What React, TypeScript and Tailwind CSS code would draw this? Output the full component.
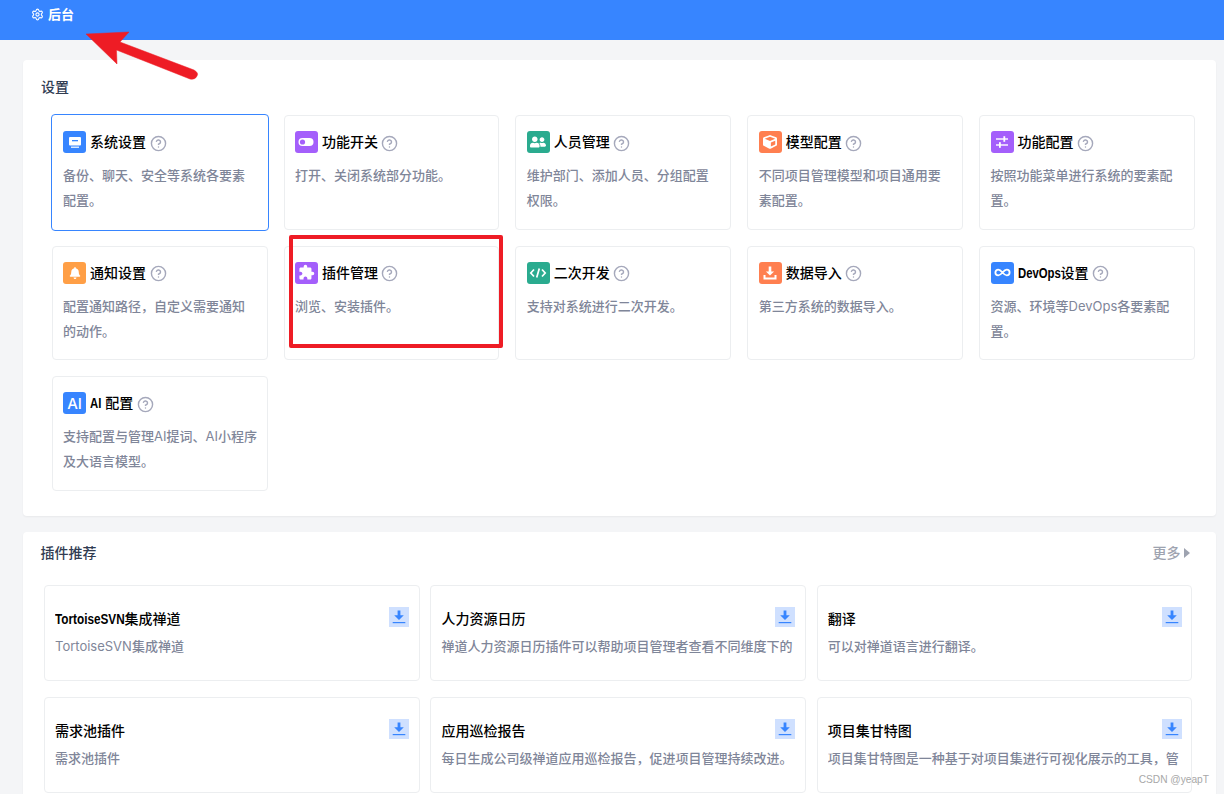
import { CircleHelp, Settings, Infinity as InfinityIcon } from "lucide-react";
import { FaBell, FaCube, FaUserFriends } from "react-icons/fa";
import { MdExtension } from "react-icons/md";
import type { ReactNode } from "react";

const Monitor = (
  <svg viewBox="0 0 22 22" className="w-[22px] h-[22px]">
    <rect x="5" y="6" width="12" height="8.5" rx="1" fill="#fff" />
    <rect x="8" y="9" width="6" height="1.3" fill="#3785ff" />
    <rect x="7" y="15.6" width="8" height="1.2" fill="#fff" />
  </svg>
);
const Toggle = (
  <svg viewBox="0 0 22 22" className="w-[22px] h-[22px]">
    <rect x="3.5" y="7" width="15" height="8" rx="4" fill="#fff" />
    <circle cx="7.5" cy="11" r="2.6" fill="#a45ffb" />
  </svg>
);
const CodeIcon = (
  <svg viewBox="0 0 22 22" className="w-[22px] h-[22px]" fill="none" stroke="#fff" strokeWidth="1.7">
    <path d="M7 7.5 3.8 11 7 14.5M15 7.5l3.2 3.5-3.2 3.5M12.3 6.5l-2.6 9" />
  </svg>
);
const Sliders = (
  <svg viewBox="0 0 22 22" className="w-[22px] h-[22px]" fill="#fff">
    <rect x="5" y="7.3" width="12" height="1.4" />
    <rect x="5" y="13.3" width="12" height="1.4" />
    <rect x="12.4" y="5.2" width="1.8" height="5.6" />
    <rect x="8" y="11.2" width="1.8" height="5.6" />
  </svg>
);
const ImportIcon = (
  <svg viewBox="0 0 22 22" className="w-[22px] h-[22px]" fill="#fff">
    <path d="M9.7 4.5h2.6v5h2.8L11 13.6 6.9 9.5h2.8z" />
    <path d="M4.5 13h2v2.4h9V13h2v4.4h-13z" />
  </svg>
);

type Item = { title: ReactNode; desc: ReactNode; color: string; icon: ReactNode; active?: boolean };

const items: Item[] = [
  { title: "系统设置", desc: "备份、聊天、安全等系统各要素配置。", color: "bg-[#3785ff]", icon: Monitor, active: true },
  { title: "功能开关", desc: "打开、关闭系统部分功能。", color: "bg-[#a45ffb]", icon: Toggle },
  { title: "人员管理", desc: "维护部门、添加人员、分组配置权限。", color: "bg-[#2aab8f]", icon: <FaUserFriends className="text-white text-[16px]" /> },
  { title: "模型配置", desc: "不同项目管理模型和项目通用要素配置。", color: "bg-[#ff7f50]", icon: <FaCube className="text-white text-[14px]" /> },
  { title: "功能配置", desc: "按照功能菜单进行系统的要素配置。", color: "bg-[#a45ffb]", icon: Sliders },
  { title: "通知设置", desc: "配置通知路径，自定义需要通知的动作。", color: "bg-[#ff9f46]", icon: <FaBell className="text-white text-[12px]" /> },
  { title: "插件管理", desc: "浏览、安装插件。", color: "bg-[#a45ffb]", icon: <MdExtension className="text-white text-[17px]" /> },
  { title: "二次开发", desc: "支持对系统进行二次开发。", color: "bg-[#2aab8f]", icon: CodeIcon },
  { title: "数据导入", desc: "第三方系统的数据导入。", color: "bg-[#ff7f50]", icon: ImportIcon },
  {
    title: (
      <>
        <span className="inline-block origin-left scale-x-[0.81] -mr-[10px] font-bold">DevOps</span>设置
      </>
    ),
    desc: (
      <>
        资源、环境等<span className="font-normal">DevOps</span>各要素配置。
      </>
    ),
    color: "bg-[#3785ff]",
    icon: <InfinityIcon className="text-white w-[17px] h-[17px]" strokeWidth={2.6} />,
  },
  {
    title: (
      <>
        <span className="inline-block origin-left scale-x-[0.81] -mr-[2.7px] font-bold">AI</span> 配置
      </>
    ),
    desc: (
      <>
        支持配置与管理<span className="font-normal">AI</span>提词、<span className="font-normal">AI</span>小程序及大语言模型。
      </>
    ),
    color: "bg-[#3785ff]",
    icon: <span className="text-white text-[15px] font-medium leading-none">AI</span>,
  },
];

const plugins: { title: ReactNode; desc: ReactNode }[] = [
  {
    title: (
      <>
        <span className="inline-block origin-left scale-x-[0.84] -mr-[13.5px] font-bold">TortoiseSVN</span>集成禅道
      </>
    ),
    desc: (
      <>
        <span className="font-normal">TortoiseSVN</span>集成禅道
      </>
    ),
  },
  { title: "人力资源日历", desc: "禅道人力资源日历插件可以帮助项目管理者查看不同维度下的" },
  { title: "翻译", desc: "可以对禅道语言进行翻译。" },
  { title: "需求池插件", desc: "需求池插件" },
  { title: "应用巡检报告", desc: "每日生成公司级禅道应用巡检报告，促进项目管理持续改进。" },
  { title: "项目集甘特图", desc: "项目集甘特图是一种基于对项目集进行可视化展示的工具，管" },
];

export default function App() {
  return (
    <div className="relative h-[794px] overflow-hidden bg-[#f4f5f7] font-['Inter','Noto_Sans_CJK_SC',sans-serif]">
      <header className="h-10 bg-[#3785ff] pl-[31px] pt-[4px] flex items-start text-white">
        <div className="flex items-center gap-[4px] h-5">
          <Settings className="w-[13px] h-[13px]" strokeWidth={2} />
          <span className="text-[13px] font-bold leading-5">后台</span>
        </div>
      </header>

      <section className="mt-5 ml-[23px] mr-2 bg-white rounded-[4px] pt-[17px] pb-[25px] pl-[18px] pr-[21px] shadow-[0_1px_2px_rgba(0,0,0,0.05)]">
        <h2 className="h-5 leading-5 text-[14px] font-medium text-[#313c52]">设置</h2>
        <div className="mt-[18px] ml-[10.7px] grid grid-cols-5 gap-x-4 gap-y-4 auto-rows-[114.5px]">
          {items.map((it, i) => (
            <div
              key={i}
              className={
                it.active
                  ? "-m-px rounded-[4px] border border-[#3785ff] pl-[11.4px] pr-[10.1px] pt-[16px]"
                  : "rounded-[4px] border border-[#eceef0] pl-[10.4px] pr-[9.1px] pt-[15px]"
              }
            >
              <div className="flex items-center h-[22px]">
                <span className={`w-[23px] h-[22px] rounded-[3px] flex items-center justify-center shrink-0 ${it.color}`}>
                  {it.icon}
                </span>
                <span className="ml-[4px] text-[14px] font-medium text-black whitespace-nowrap leading-[22px] font-['Liberation_Sans','Noto_Sans_CJK_SC',sans-serif]">
                  {it.title}
                </span>
                <CircleHelp className="ml-[3.5px] mt-[2px] w-[17px] h-[17px] text-[#a5a8bb]" strokeWidth={2} />
              </div>
              <p className="mt-[10px] text-[13px] leading-[25px] font-medium text-[#7f8699]">{it.desc}</p>
            </div>
          ))}
        </div>
      </section>

      <section className="mt-4 ml-[23px] mr-2 bg-white rounded-[4px] pt-[11px] pl-[21px] pr-[23.6px] pb-6 shadow-[0_1px_2px_rgba(0,0,0,0.05)]">
        <div className="flex items-center justify-between h-5">
          <h2 className="-ml-[3.5px] leading-5 text-[14px] font-medium text-[#313c52]">插件推荐</h2>
          <div className="flex items-center gap-[4px] mr-[2px] text-[14px] font-medium text-[#9ea3b0] leading-5">
            更多
            <svg viewBox="0 0 6 10" className="w-[6px] h-[10px]" fill="#9ea3b0">
              <path d="M0 0l6 5-6 5z" />
            </svg>
          </div>
        </div>
        <div className="mt-[22px] grid grid-cols-3 gap-x-[10.8px] gap-y-4 auto-rows-[96px]">
          {plugins.map((p, i) => (
            <div key={i} className="relative rounded-[4px] border border-[#eceef0] pl-[10px] pr-[11px] pt-[21px] overflow-hidden">
              <div className="h-6 leading-6 text-[14px] font-medium text-black whitespace-nowrap font-['Liberation_Sans','Noto_Sans_CJK_SC',sans-serif]">
                {p.title}
              </div>
              <div className="mt-[3px] h-6 leading-6 text-[13px] font-medium text-[#7f8699] whitespace-nowrap overflow-hidden">{p.desc}</div>
              <span className="absolute right-[9.6px] top-[21px] w-5 h-5 bg-[#cfe0ff] flex items-center justify-center">
                <svg viewBox="0 0 20 20" className="w-5 h-5">
                  <path d="M8.6 3.5h2.8v4.8h3.4L10 13 5.2 8.3h3.4z" fill="#3785ff" />
                  <rect x="3.7" y="15" width="12.6" height="1.2" fill="#3785ff" />
                </svg>
              </span>
            </div>
          ))}
        </div>
      </section>

      {/* Annotations drawn over the screenshot */}
      <svg className="absolute left-0 top-0 w-[220px] h-[90px] pointer-events-none" viewBox="0 0 220 90">
        <path
          d="M86 34 L129 32 L120 42 L194 70 Q199 73 197 76 Q195 80 190 79 L116.5 50 L117 64 Z"
          fill="#ee1c25"
          stroke="#ee1c25"
          strokeWidth="0.5"
          strokeLinejoin="round"
        />
      </svg>
      <div className="absolute left-[289px] top-[235px] w-[214px] h-[113px] border-[4px] border-[#ee1c25] rounded-[2px] pointer-events-none" />
      <div className="absolute right-[15px] bottom-[6px] text-[10.2px] leading-4 text-[#a8a8a8] font-['Liberation_Sans',sans-serif]">CSDN @yeapT</div>
    </div>
  );
}
